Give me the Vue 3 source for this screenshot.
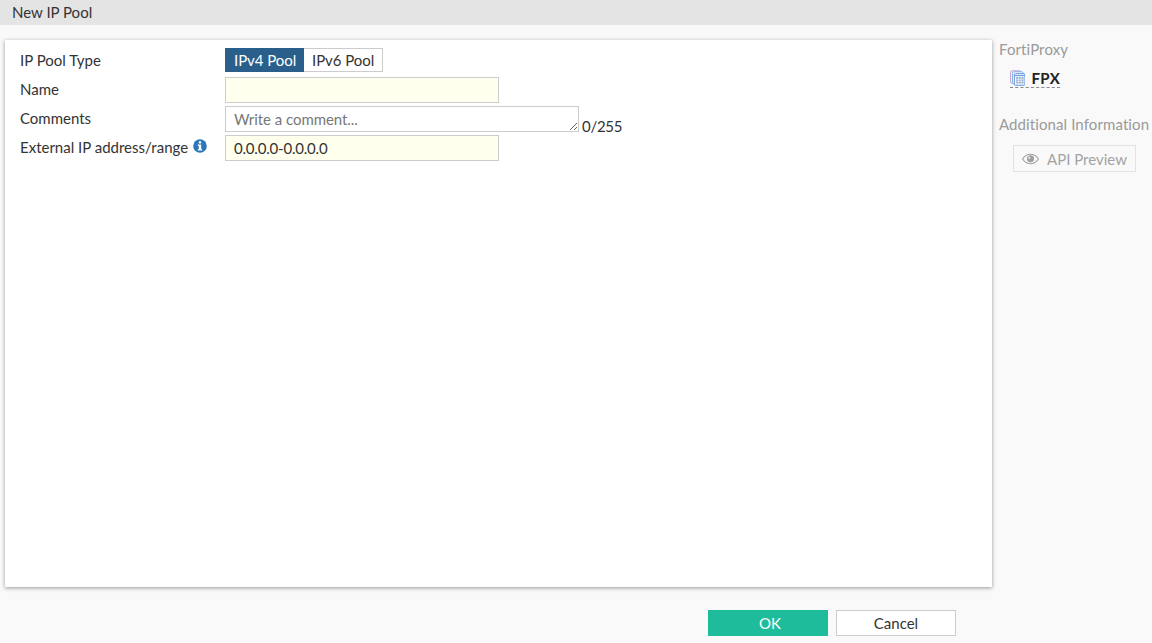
<script setup>
const rows = [
  { label: 'Name', kind: 'name' },
  { label: 'Comments', kind: 'comments' },
  { label: 'External IP address/range', kind: 'range' }
]
</script>

<template>
  <div class="page">
    <header class="title">New IP Pool</header>
    <div class="content">
      <main class="card">
        <div class="row first">
          <div class="label">IP Pool Type</div>
          <div class="tabs">
            <span class="tab active">IPv4 Pool</span>
            <span class="tab">IPv6 Pool</span>
          </div>
        </div>
        <div v-for="r in rows" :key="r.kind" class="row">
          <div class="label">
            {{ r.label }}
            <svg v-if="r.kind === 'range'" class="info" viewBox="0 0 14 14" width="14" height="14">
              <circle cx="7" cy="7" r="6.8" fill="#2a76b8" />
              <rect x="5.8" y="2.300" width="2.400" height="2.200" fill="#fff" />
              <path d="M4.800 5.600h3.400v4.600h1v1.400H4.800v-1.400h1V7H4.800z" fill="#fff" />
            </svg>
          </div>
          <input v-if="r.kind === 'name'" class="field req" type="text" />
          <template v-else-if="r.kind === 'comments'">
            <textarea class="field area" placeholder="Write a comment..."></textarea>
            <span class="count">0/255</span>
          </template>
          <input v-else class="field req value" type="text" value="0.0.0.0-0.0.0.0" />
        </div>
      </main>
      <aside class="side">
        <h3 class="side-head">FortiProxy</h3>
        <div class="device">
          <svg viewBox="0 0 16 16" width="16" height="16">
            <rect x="0.500" y="0.500" width="11" height="13" rx="1.500" fill="#fbf7fc" stroke="#c7a4d8" />
            <rect x="2.500" y="1.500" width="11" height="12.500" rx="1.500" fill="#f4f8fd" stroke="#7fa9e0" />
            <rect x="4.500" y="3.500" width="11" height="12" rx="1" fill="#f4f8fd" stroke="#5b93dc" />
            <path d="M6.500 7h7.500v6.500H6.500z" fill="#8ba4c4" />
            <path d="M9 7v6.500M11.500 7v6.500M6.500 9.200H14M6.500 11.400H14" stroke="#f4f8fd" stroke-width=".8" />
            <path d="M4.500 5.500h11" stroke="#5b93dc" />
          </svg>
          <span class="fpx">FPX</span>
        </div>
        <h3 class="side-head second">Additional Information</h3>
        <div class="api">
          <svg viewBox="0 0 18 12" width="17" height="12">
            <path d="M.6 6C2.800 2.600 5.600 1 9 1s6.200 1.600 8.400 5c-2.200 3.400-5 5-8.400 5S2.800 9.400.6 6z" fill="none" stroke="#a0a0a0" stroke-width="1.200" />
            <circle cx="9" cy="5.800" r="3.800" fill="#a0a0a0" />
            <circle cx="7.700" cy="4.600" r="1.100" fill="#f9f9f9" />
          </svg>
          <span>API Preview</span>
        </div>
      </aside>
    </div>
    <footer class="foot">
      <button class="btn ok">OK</button>
      <button class="btn cancel">Cancel</button>
    </footer>
  </div>
</template>

<style>
html, body { margin: 0; background: #f9f9f9; }
</style>

<style scoped>
.page {
  width: 1152px;
  height: 643px;
  display: flex;
  flex-direction: column;
  background: #f9f9f9;
  font-family: Lato, "Open Sans", sans-serif;
  font-size: 15px;
  color: #333;
  overflow: hidden;
}
.title {
  height: 25px;
  line-height: 25px;
  padding-left: 12px;
  background: #e4e4e4;
  color: #333;
  flex: none;
  box-sizing: border-box;
}
.content {
  display: flex;
  padding: 15px 0 0 5px;
  flex: none;
}
.card {
  width: 987px;
  height: 547px;
  box-sizing: border-box;
  background: #fff;
  box-shadow: 0 1px 4px rgba(0, 0, 0, 0.4);
  padding: 8px 15px;
}
.row {
  display: flex;
  align-items: flex-start;
  height: 26px;
  margin-bottom: 3px;
}
.row.first {
  height: 24px;
  margin-bottom: 5px;
}
.label {
  width: 205px;
  flex: none;
  line-height: 24px;
  display: flex;
  align-items: center;
  gap: 5px;
  white-space: nowrap;
}
.tabs { display: flex; }
.tab {
  width: 79px;
  height: 24px;
  line-height: 22px;
  box-sizing: border-box;
  padding-left: 8px;
  border: 1px solid #ccc;
  border-left: none;
  color: #333;
  letter-spacing: -0.05px;
  white-space: nowrap;
}
.tab.active {
  background: #2a5f8c;
  border: 1px solid #2a5f8c;
  color: #fff;
}
.field {
  box-sizing: border-box;
  height: 26px;
  width: 274px;
  border: 1px solid #ccc;
  border-radius: 0;
  padding: 0 8px;
  margin: 0;
  font: inherit;
  color: #333;
  outline: none;
  background: #fff;
  display: block;
}
.req { background: #ffffee; }
.value { letter-spacing: -0.2px; }
.area {
  width: 354px;
  line-height: 24px;
  resize: both;
  overflow: hidden;
  letter-spacing: -0.05px;
}
.area::placeholder { color: #777; opacity: 1; }
.count {
  align-self: flex-end;
  margin: 0 0 -3px 3px;
  line-height: 18px;
  letter-spacing: -0.3px;
}
.info { flex: none; margin-top: -2px; }
.side {
  padding-left: 7px;
  flex: 1;
  white-space: nowrap;
}
.side-head {
  margin: -1px 0 0;
  font-size: 15px;
  font-weight: 400;
  line-height: 20px;
  color: #9a9a9a;
  letter-spacing: 0.1px;
}
.device {
  display: flex;
  align-items: center;
  gap: 5px;
  margin: 9px 0 0 11px;
  height: 19px;
  border-bottom: 1px dashed #888;
  font-weight: 700;
  color: #222;
  width: 50px;
}
.fpx { padding-left: 1px; letter-spacing: 0.3px; }
.side-head.second { margin-top: 26px; }
.api {
  display: flex;
  align-items: center;
  gap: 8px;
  box-sizing: border-box;
  width: 123px;
  height: 27px;
  margin: 11px 0 0 14px;
  padding-left: 8px;
  border: 1px solid #e2e2e2;
  color: #a3a3a3;
}
.foot {
  display: flex;
  gap: 8px;
  padding: 23px 0 0 708px;
}
.btn {
  width: 120px;
  height: 26px;
  box-sizing: border-box;
  margin: 0;
  padding: 0;
  font: inherit;
  border-radius: 0;
}
.ok {
  background: #1fbc9b;
  border: none;
  color: #fff;
  padding-left: 4px;
}
.cancel {
  background: #fff;
  border: 1px solid #ccc;
  color: #333;
}
</style>
